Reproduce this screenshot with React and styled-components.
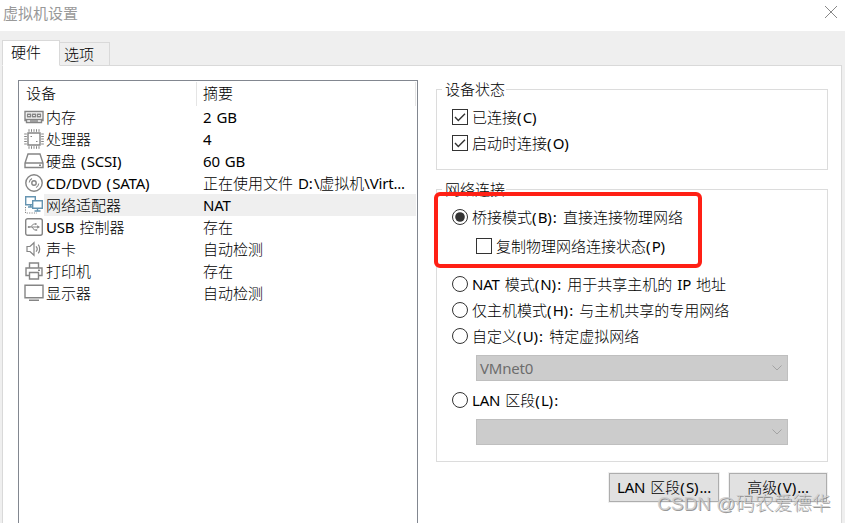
import React from "react";
import styled, { createGlobalStyle } from "styled-components";

const GlobalStyle = createGlobalStyle`
  *, *::before, *::after { box-sizing: border-box; }
  body {
    margin: 0;
    overflow: hidden;
    background: #efefef;
    font: 300 15px/22px "Noto Sans", "Noto Sans CJK SC", sans-serif;
    color: #000;
  }
`;

const Window = styled.div`
  position: relative;
  width: 845px;
  height: 523px;
  overflow: hidden;
  display: flex;
  flex-direction: column;
`;

const TitleBar = styled.header`
  display: flex;
  justify-content: space-between;
  height: 31px;
  flex: none;
  padding: 2px 7px 0 3px;
  background: #fff;
  color: #999;
  font-weight: 400;
`;

const CloseIcon = styled.svg`
  width: 14px;
  height: 14px;
  margin-top: 3px;
`;

const TabBar = styled.nav`
  display: flex;
  align-items: flex-end;
  height: 35px;
  flex: none;
  padding-left: 2px;
  margin-bottom: -1px;
`;

const Tab = styled.div`
  width: ${(p) => (p.$active ? 58 : 50)}px;
  height: ${(p) => (p.$active ? 26 : 24)}px;
  padding-left: ${(p) => (p.$active ? 8 : 4)}px;
  border: 1px solid #d9d9d9;
  border-left-width: ${(p) => (p.$active ? 1 : 0)}px;
  border-bottom-color: ${(p) => (p.$active ? "#fff" : "#d9d9d9")};
  background: ${(p) => (p.$active ? "#fff" : "#efefef")};
  z-index: 1;
`;

const Panel = styled.main`
  display: flex;
  align-items: flex-start;
  flex: none;
  width: 840px;
  height: 470px;
  margin-left: 2px;
  padding: 14px 13px 0 15px;
  border: 1px solid #d9d9d9;
  background: #fff;
`;

const DeviceList = styled.section`
  width: 400px;
  height: 460px;
  border: 1px solid #828790;
  padding: 1px 1px 0 1px;
`;

const ListHeader = styled.div`
  display: grid;
  grid-template-columns: 177px 1fr;
  height: 24px;
`;

const HeaderCell = styled.div`
  padding-left: 6px;
  border-right: 1px solid #e5e5e5;
`;

const DeviceRow = styled.div`
  display: grid;
  grid-template-columns: 24px 153px 1fr;
  height: 22px;
  white-space: nowrap;
  background: ${(p) =>
    p.$selected ? "linear-gradient(90deg, #fff 24px, #efefef 24px)" : "none"};
`;

const DeviceIcon = styled.svg`
  width: 20px;
  height: 20px;
  margin: 1px 0 0 4px;
  fill: none;
  stroke: #858585;
  stroke-width: 1.4;
`;

const DeviceText = styled.span`
  padding-left: ${(p) => p.$inset}px;
`;

const Latin = styled.span`
  font-weight: 400;
  letter-spacing: -0.2px;
`;

const Punctuation = styled.span`
  font-weight: 400;
  letter-spacing: 1.1px;
`;

const Settings = styled.section`
  width: 392px;
  margin: -2px 0 0 18px;
`;

const Group = styled.fieldset`
  position: relative;
  height: ${(p) => p.$height}px;
  min-width: 0;
  margin: 0 0 8px;
  padding: 4px 0 0 15px;
  border: 1px solid #dcdcdc;
`;

const Legend = styled.legend`
  height: 22px;
  margin-left: -10px;
  padding: 0 1px 0 3px;
`;

const Option = styled.label`
  display: flex;
  align-items: center;
  height: 26px;
  gap: 4px;
  margin: ${(p) => p.$margin || "0"};
  white-space: nowrap;
`;

const Mark = styled.svg`
  width: 16px;
  height: 16px;
  flex: none;
  fill: #fff;
  stroke: #333;
`;

const Combo = styled.div`
  display: flex;
  justify-content: space-between;
  align-items: center;
  width: 312px;
  height: 26px;
  margin: 6px 0 6px 24px;
  padding: 0 4px 0 3px;
  border: 1px solid #bfbfbf;
  background: #ccc;
  color: #6d6d6d;
`;

const ComboArrow = styled.svg`
  width: 12px;
  height: 8px;
  fill: none;
  stroke: #a3a3a3;
`;

const Highlight = styled.div`
  position: absolute;
  left: -3px;
  top: -8px;
  width: 268px;
  height: 76px;
  border: 4px solid #ff2015;
  border-radius: 6px;
`;

const Actions = styled.div`
  display: flex;
  justify-content: flex-end;
  gap: 10px;
  margin: 11px 1px 0 0;
`;

const Button = styled.button`
  width: ${(p) => p.$width}px;
  height: 29px;
  padding: 0 0 2px;
  border: 1px solid #adadad;
  outline: 1px solid #f0f0f0;
  background: #e1e1e1;
  color: #000;
  font: inherit;
  white-space: nowrap;
`;

const Watermark = styled.div`
  position: absolute;
  left: 657px;
  top: 492px;
  font: 300 19px/24px "Liberation Sans", "Noto Sans CJK SC", sans-serif;
  color: rgba(205, 205, 205, 0.9);
  text-shadow: 1px 1px 0 rgba(120, 120, 120, 0.75);
  white-space: nowrap;
`;

const icons = {
  memory: (
    <>
      <path d="M1 4.5h18v9h-1.5v2h-15v-2H1zM1 12.5h18M7 13v2M9 13v2M11 13v2M13 13v2" />
      <path d="M3.5 7.2h3v2.6h-3zM8.5 7.2h3v2.6h-3zM13.5 7.2h3v2.6h-3z" />
    </>
  ),
  cpu: (
    <>
      <path d="M4 4h12v12H4z" />
      <path strokeWidth="1" d="M5 .2v2.6M7.5 .2v2.6M10 .2v2.6M12.5 .2v2.6M15 .2v2.6M5 17.2v2.6M7.5 17.2v2.6M10 17.2v2.6M12.5 17.2v2.6M15 17.2v2.6M.2 5h2.6M.2 7.5h2.6M.2 10h2.6M.2 12.5h2.6M.2 15h2.6M17.2 5h2.6M17.2 7.5h2.6M17.2 10h2.6M17.2 12.5h2.6M17.2 15h2.6M6.5 7.5H8M12 12.5h1.5" />
    </>
  ),
  disk: <path d="M4 3h12l3 9v4.5H1V12zM1 12h18M15 14.3h2" />,
  disc: (
    <>
      <circle cx="10" cy="10" r="8.2" />
      <circle cx="10" cy="10" r="2.2" />
      <path strokeWidth="1.1" d="M5.2 9.5A5 5 0 0 1 8 5.6M14.8 10.5A5 5 0 0 1 12 14.4" />
    </>
  ),
  network: (
    <>
      <path stroke="#6594b1" fill="#fff" d="M1.7 1.7h9.6v8H1.7zM4 12h5M6.5 9.7V12" />
      <path stroke="#6594b1" fill="#fff" d="M8.7 5.7h9.6v7.6H8.7zM13.5 13.3v2.5M10.5 16h6" />
      <path strokeDasharray="1.2 1.2" strokeWidth="1" d="M1.5 12v6H13" />
    </>
  ),
  usb: (
    <>
      <rect x="1.7" y="1.7" width="16.6" height="16.6" rx="2" />
      <path strokeWidth="1" d="M5 10h9M6.5 10l3-3h2.2M8 10l2.4 3h1.8" />
      <path fill="#858585" stroke="none" d="M13.2 8.2 16 10l-2.8 1.8zM11 6.2h1.6v1.6H11zM11.6 12.2h1.6v1.6h-1.6z" />
      <circle cx="4.8" cy="10" r="1.1" fill="#858585" stroke="none" />
    </>
  ),
  sound: <path strokeWidth="1.2" d="M3 7.5h3l4-3.8v12.6l-4-3.8H3zM12 7.3c1.4 1.5 1.4 3.9 0 5.4M14.2 5.7c2 2.3 2 6.3 0 8.6" />,
  printer: <path d="M5.5 7V2h9v5M5.5 14.5H2V7h16v7.5h-3.5M5.5 11.5h9V18h-9zM14 9.2h2" />,
  display: <path d="M1 2.3h18v12.4H1zM5 17.3h10" />,
};

const devices = [
  ["memory", "内存", "2 GB"],
  ["cpu", "处理器", "4"],
  ["disk", "硬盘 (SCSI)", "60 GB"],
  ["disc", "CD/DVD (SATA)", "正在使用文件 D:\\虚拟机\\Virt..."],
  ["network", "网络适配器", "NAT"],
  ["usb", "USB 控制器", "存在"],
  ["sound", "声卡", "自动检测"],
  ["printer", "打印机", "存在"],
  ["display", "显示器", "自动检测"],
];

// Chinese stays light; Latin letters and punctuation get their own weight and spacing.
function Mixed({ text }) {
  return text
    .split(/([A-Za-z0-9/\\.]+|[():\s]+)/)
    .filter(Boolean)
    .map((run, i) => {
      if (/^[A-Za-z0-9/\\.]/.test(run)) return <Latin key={i}>{run}</Latin>;
      if (/^[():\s]/.test(run)) return <Punctuation key={i}>{run}</Punctuation>;
      return run;
    });
}

function Check({ checked, text, ...rest }) {
  return (
    <Option {...rest}>
      <Mark viewBox="0 0 16 16">
        <rect x=".5" y=".5" width="15" height="15" />
        {checked && <path fill="none" strokeWidth="1.4" d="M3 8l3.3 3.4L13 4.7" />}
      </Mark>
      <span><Mixed text={text} /></span>
    </Option>
  );
}

function Radio({ checked, text }) {
  return (
    <Option>
      <Mark viewBox="0 0 16 16">
        <circle cx="8" cy="8" r="7.5" />
        {checked && <circle cx="8" cy="8" r="4.8" fill="#333" stroke="none" />}
      </Mark>
      <span><Mixed text={text} /></span>
    </Option>
  );
}

function Select({ value = "" }) {
  return (
    <Combo>
      <span><Mixed text={value} /></span>
      <ComboArrow viewBox="0 0 12 8">
        <path d="M1.5 1.5 6 6l4.5-4.5" />
      </ComboArrow>
    </Combo>
  );
}

export default function App() {
  return (
    <Window>
      <GlobalStyle />
      <TitleBar>
        <span>虚拟机设置</span>
        <CloseIcon viewBox="0 0 14 14" stroke="#888">
          <path d="M1 1l12 12M13 1 1 13" />
        </CloseIcon>
      </TitleBar>
      <TabBar>
        <Tab $active>硬件</Tab>
        <Tab>选项</Tab>
      </TabBar>
      <Panel>
        <DeviceList>
          <ListHeader>
            <HeaderCell>设备</HeaderCell>
            <HeaderCell>摘要</HeaderCell>
          </ListHeader>
          {devices.map(([icon, name, summary]) => (
            <DeviceRow key={icon} $selected={icon === "network"}>
              <DeviceIcon viewBox="0 0 20 20">{icons[icon]}</DeviceIcon>
              <DeviceText $inset={2}><Mixed text={name} /></DeviceText>
              <DeviceText $inset={6}><Mixed text={summary} /></DeviceText>
            </DeviceRow>
          ))}
        </DeviceList>
        <Settings>
          <Group $height={92}>
            <Legend>设备状态</Legend>
            <Check checked text="已连接(C)" />
            <Check checked text="启动时连接(O)" />
          </Group>
          <Group $height={284}>
            <Legend>网络连接</Legend>
            <Radio checked text="桥接模式(B): 直接连接物理网络" />
            <Check $margin="3px 0 12px 24px" text="复制物理网络连接状态(P)" />
            <Radio text="NAT 模式(N): 用于共享主机的 IP 地址" />
            <Radio text="仅主机模式(H): 与主机共享的专用网络" />
            <Radio text="自定义(U): 特定虚拟网络" />
            <Select value="VMnet0" />
            <Radio text="LAN 区段(L):" />
            <Select />
            <Highlight />
          </Group>
          <Actions>
            <Button $width={110}><Mixed text="LAN 区段(S)..." /></Button>
            <Button $width={98}><Mixed text="高级(V)..." /></Button>
          </Actions>
        </Settings>
      </Panel>
      <Watermark>CSDN @码农爱德华</Watermark>
    </Window>
  );
}
